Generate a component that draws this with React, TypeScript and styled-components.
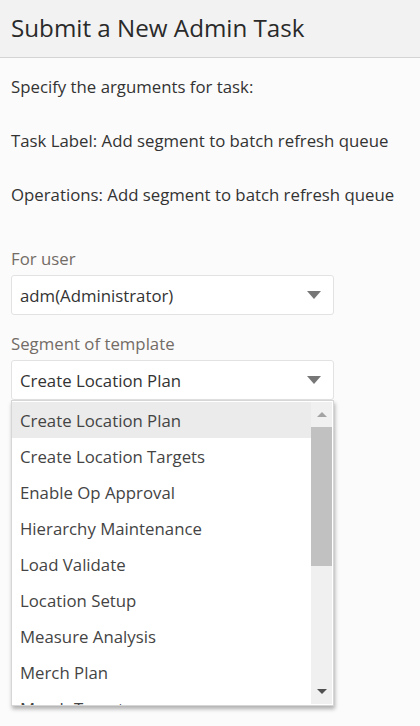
import styled, { createGlobalStyle } from "styled-components";

const GlobalStyle = createGlobalStyle`
  html, body {
    margin: 0;
    padding: 0;
    background: #fbfbfb;
  }
  body {
    font-family: "Open Sans", "Noto Sans", sans-serif;
    color: #333;
  }
`;

const Page = styled.div`
  width: 420px;
  height: 726px;
  overflow: hidden;
  background: #fbfbfb;
`;

const Header = styled.header`
  height: 58px;
  box-sizing: border-box;
  padding: 0 11px;
  display: flex;
  align-items: center;
  background: #f2f2f2;
  border-bottom: 1px solid #d4d4d4;
`;

const Title = styled.h1`
  margin: 0 0 2px;
  font-size: 24.2px;
  font-weight: 400;
  color: #2a2a2a;
`;

const Body = styled.div`
  padding: 17px 11px 0;
  display: flex;
  flex-direction: column;
`;

const Line = styled.p`
  margin: 0;
  height: 54px;
  font-size: 16.8px;
  line-height: 24px;
  color: #333;
`;

const Field = styled.div<{ $top: number }>`
  display: flex;
  flex-direction: column;
  margin-top: ${({ $top }) => $top}px;
`;

const Label = styled.label`
  font-size: 16.8px;
  line-height: 20px;
  color: #736c66;
  margin-bottom: 6px;
`;

const SelectWrap = styled.div`
  position: relative;
  width: 323px;
`;

const SelectBox = styled.div`
  height: 40px;
  box-sizing: border-box;
  padding: 0 12px 0 8px;
  display: flex;
  align-items: center;
  justify-content: space-between;
  background: #fff;
  border: 1px solid #e2e2e2;
  border-radius: 3px;
  font-size: 16.8px;
  color: #333;
`;

const Caret = styled.span`
  width: 0;
  height: 0;
  border-left: 7px solid transparent;
  border-right: 7px solid transparent;
  border-top: 8px solid #777;
`;

const ListBox = styled.div`
  position: absolute;
  top: 40px;
  left: 0;
  width: 323px;
  height: 306px;
  box-sizing: border-box;
  display: flex;
  background: #fff;
  border: 1px solid #d6d6d6;
  box-shadow: 1px 3px 4px rgba(0, 0, 0, 0.3);
  overflow: hidden;
`;

const Items = styled.ul`
  list-style: none;
  margin: 0;
  padding: 1px 0 0;
  flex: 1;
  overflow: hidden;
`;

const Item = styled.li<{ $active?: boolean }>`
  height: 36px;
  display: flex;
  align-items: center;
  padding-left: 8px;
  font-size: 16.8px;
  color: #444;
  white-space: nowrap;
  background: ${({ $active }) => ($active ? "#ebebeb" : "transparent")};
`;

const ScrollBar = styled.div`
  width: 21px;
  margin: 1px 1px 1px 0;
  background: #f0f0f0;
  display: flex;
  flex-direction: column;
  align-items: center;
`;

const ArrowBtn = styled.div`
  height: 25px;
  width: 100%;
  display: flex;
  align-items: center;
  justify-content: center;
`;

const Tri = styled.span<{ $down?: boolean }>`
  width: 0;
  height: 0;
  border-left: 5px solid transparent;
  border-right: 5px solid transparent;
  ${({ $down }) =>
    $down ? "border-top: 5px solid #505050;" : "border-bottom: 5px solid #a3a3a3;"}
`;

const Thumb = styled.div`
  width: 100%;
  height: 139px;
  background: #c1c1c1;
`;

const Track = styled.div`
  flex: 1;
`;

const options = [
  "Create Location Plan",
  "Create Location Targets",
  "Enable Op Approval",
  "Hierarchy Maintenance",
  "Load Validate",
  "Location Setup",
  "Measure Analysis",
  "Merch Plan",
  "Merch Targets",
];

export default function App() {
  return (
    <Page>
      <GlobalStyle />
      <Header>
        <Title>Submit a New Admin Task</Title>
      </Header>
      <Body>
        <Line>Specify the arguments for task:</Line>
        <Line>Task Label: Add segment to batch refresh queue</Line>
        <Line>Operations: Add segment to batch refresh queue</Line>
        <Field $top={12}>
          <Label>For user</Label>
          <SelectWrap>
            <SelectBox>
              <span>adm(Administrator)</span>
              <Caret />
            </SelectBox>
          </SelectWrap>
        </Field>
        <Field $top={19}>
          <Label>Segment of template</Label>
          <SelectWrap>
            <SelectBox>
              <span>Create Location Plan</span>
              <Caret />
            </SelectBox>
            <ListBox>
              <Items>
                {options.map((o, i) => (
                  <Item key={o} $active={i === 0}>
                    {o}
                  </Item>
                ))}
              </Items>
              <ScrollBar>
                <ArrowBtn>
                  <Tri />
                </ArrowBtn>
                <Thumb />
                <Track />
                <ArrowBtn>
                  <Tri $down />
                </ArrowBtn>
              </ScrollBar>
            </ListBox>
          </SelectWrap>
        </Field>
      </Body>
    </Page>
  );
}
